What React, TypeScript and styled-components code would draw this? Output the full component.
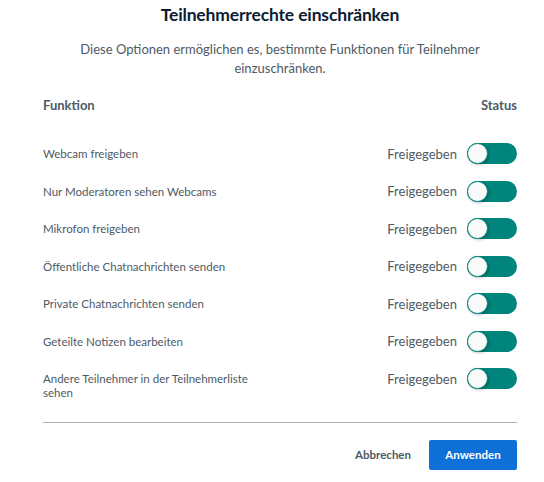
import styled, { createGlobalStyle } from 'styled-components'

const GlobalStyle = createGlobalStyle`
  body {
    margin: 0;
    background: #fff;
    font-family: Lato, "Open Sans", sans-serif;
  }
`

const Modal = styled.div`
  width: 544px;
  height: 482px;
  box-sizing: border-box;
  padding: 3px 27px 0 43px;
  display: flex;
  flex-direction: column;
`

const Title = styled.h2`
  margin: 0;
  text-align: center;
  font-size: 17.5px;
  letter-spacing: -0.15px;
  font-weight: 700;
  color: #0c1d33;
  line-height: 24px;
`

const Description = styled.p`
  margin: 13px 0 0;
  text-align: center;
  font-size: 13px;
  line-height: 19px;
  color: #4e5a66;
`

const Table = styled.div`
  margin-top: 16px;
  display: flex;
  flex-direction: column;
`

const HeaderRow = styled.div`
  display: flex;
  justify-content: space-between;
  font-size: 13px;
  font-weight: 700;
  color: #4e5a66;
  height: 22px;
  align-items: center;
  margin-bottom: 27px;
`

const Row = styled.div`
  display: flex;
  align-items: flex-start;
  justify-content: space-between;
  min-height: 37.5px;
`

const Label = styled.span`
  font-size: 11.5px;
  line-height: 14px;
  padding-top: 4px;
  color: #4e5a66;
  max-width: 212px;
`

const StatusCell = styled.div`
  display: flex;
  align-items: center;
  gap: 10px;
`

const StatusText = styled.span`
  font-size: 13px;
  color: #4e5a66;
`

const Toggle = styled.div<{ $on: boolean }>`
  position: relative;
  width: 50px;
  height: 21px;
  border-radius: 11px;
  background: ${({ $on }) => ($on ? '#00857c' : '#b3bcc5')};
`

const Knob = styled.span`
  position: absolute;
  left: 0;
  top: 0;
  width: 21px;
  height: 21px;
  box-sizing: border-box;
  border-radius: 50%;
  background: #fafafa;
  border: 1.5px solid #00857c;
  box-shadow: 1px 1px 3px rgba(0, 0, 0, 0.25);
`

const Divider = styled.hr`
  margin: 16px 0 0;
  border: 0;
  border-top: 1px solid #a7b3bd;
`

const Footer = styled.div`
  display: flex;
  justify-content: flex-end;
  align-items: center;
  gap: 18px;
  margin-top: 17px;
`

const CancelButton = styled.button`
  border: 0;
  background: none;
  font-family: inherit;
  font-size: 11.5px;
  font-weight: 700;
  color: #4e5a66;
  padding: 0;
`

const ApplyButton = styled.button`
  border: 0;
  border-radius: 2px;
  background: #0f70d7;
  color: #fff;
  font-family: inherit;
  font-size: 11.5px;
  font-weight: 700;
  width: 88px;
  height: 30px;
`

const rows = [
  'Webcam freigeben',
  'Nur Moderatoren sehen Webcams',
  'Mikrofon freigeben',
  'Öffentliche Chatnachrichten senden',
  'Private Chatnachrichten senden',
  'Geteilte Notizen bearbeiten',
  'Andere Teilnehmer in der Teilnehmerliste sehen',
]

export default function App() {
  return (
    <>
      <GlobalStyle />
      <Modal>
        <Title>Teilnehmerrechte einschränken</Title>
        <Description>
          Diese Optionen ermöglichen es, bestimmte Funktionen für Teilnehmer
          <br />
          einzuschränken.
        </Description>
        <Table>
          <HeaderRow>
            <span>Funktion</span>
            <span>Status</span>
          </HeaderRow>
          {rows.map((label) => (
            <Row key={label}>
              <Label>{label}</Label>
              <StatusCell>
                <StatusText>Freigegeben</StatusText>
                <Toggle $on>
                  <Knob />
                </Toggle>
              </StatusCell>
            </Row>
          ))}
        </Table>
        <Divider />
        <Footer>
          <CancelButton>Abbrechen</CancelButton>
          <ApplyButton>Anwenden</ApplyButton>
        </Footer>
      </Modal>
    </>
  )
}
